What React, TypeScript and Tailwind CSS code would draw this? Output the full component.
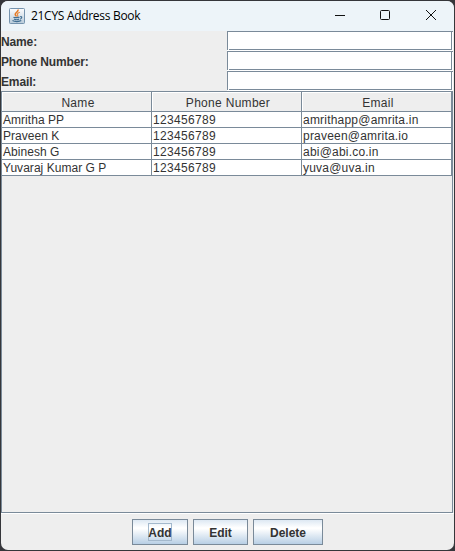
import React from "react";

const contacts = [
  ["Amritha PP", "123456789", "amrithapp@amrita.in"],
  ["Praveen K", "123456789", "praveen@amrita.io"],
  ["Abinesh G", "123456789", "abi@abi.co.in"],
  ["Yuvaraj Kumar G P", "123456789", "yuva@uva.in"],
];

const columnSpacing = ["tracking-[0.04px]", "tracking-[0.33px]", "tracking-[0.21px]"];

function JavaIcon() {
  return (
    <svg className="block h-4 w-4" viewBox="0 0 16 16" fill="none">
      <defs>
        <linearGradient id="cup" x1="0" y1="0" x2="0" y2="1">
          <stop offset="0" stopColor="#fdfdfe" />
          <stop offset="1" stopColor="#b9cbda" />
        </linearGradient>
      </defs>
      <rect x="0.5" y="0.5" width="15" height="15" rx="0.8" fill="url(#cup)" stroke="#7593ae" />
      <path d="M9 1.500C10 3.800 5.800 4.600 6.200 6.500C6.400 7.400 7.300 7.800 7.500 8.500" stroke="#e57a25" strokeWidth="1.5" />
      <path d="M10.800 4.300C8.300 5.200 8 6.200 8.700 7C9 7.500 8.800 8 8.300 8.500" stroke="#e88b42" strokeWidth="1.200" />
      <path d="M4.500 9C5 9.800 9.500 9.700 10.500 9M5 11C6.500 11.800 9 11.700 10 11M11.200 8.700C13.500 8.200 13 10.600 11 11.200M3.500 12.600C5.500 13.900 10.500 13.800 12.300 12.600" stroke="#426f93" strokeWidth="1.200" />
    </svg>
  );
}

function Field({ label }: { label: string }) {
  return (
    <div className="grid h-5 grid-cols-[226px_226px]">
      <label className="pt-[3px] text-[12px] leading-4 font-bold tracking-[-0.13px]">{label}</label>
      <div className="h-5 border-b border-white">
        <div className="h-[19px] border-t border-l border-[#7a8a99] bg-white pr-px pl-px">
          <div className="h-[18px] border-r border-b border-[#7a8a99]" />
        </div>
      </div>
    </div>
  );
}

function MetalButton({ label, size, focused }: { label: string; size: string; focused?: boolean }) {
  return (
    <button
      className={`flex h-[26px] items-center justify-center border border-[#7a8a99] bg-[linear-gradient(#dde8f3_0%,#ffffff_32%,#ffffff_36%,#b8cfe5_100%)] text-[12px] leading-4 font-bold ${size}`}
    >
      <span className={focused ? "flex h-[18px] w-6 items-center justify-center border border-[#a3b8cc]" : "pt-px"}>
        <span className={focused ? "pt-px" : ""}>{label}</span>
      </span>
    </button>
  );
}

export default function App() {
  return (
    <div className="h-[551px] w-[455px] overflow-hidden bg-[#35363a] pt-px pl-px font-['Liberation_Sans',Arial,sans-serif] text-[#333333]">
      <div className="flex h-[549px] w-[453px] flex-col overflow-hidden rounded-[7px] bg-[#eeeeee]">
        <header className="flex h-[30px] shrink-0 items-center bg-[#edf4f9] pl-2 text-black">
          <JavaIcon />
          <span className="ml-1.5 w-[150px] font-['Open_Sans','Noto_Sans',sans-serif] text-[12px] leading-4 tracking-[-0.3px] whitespace-nowrap">
            21CYS Address Book
          </span>
          <svg className="mr-px ml-auto h-[30px] w-[136px]" viewBox="0 0 136 30" fill="none" stroke="#111111">
            <path d="M18 14.500H28" />
            <rect x="63.500" y="9.500" width="9" height="9" rx="1" />
            <path d="M109 9L119 19M119 9L109 19" />
          </svg>
        </header>

        <section className="h-[60px] shrink-0">
          <Field label="Name:" />
          <Field label="Phone Number:" />
          <Field label="Email:" />
        </section>

        <div className="h-[423px] shrink-0 border-b border-white">
          <div className="h-[422px] w-[452px] border border-[#7a8a99]">
            <div className="grid h-5 grid-cols-[150px_150px_150px] text-center text-[12px] leading-[22px] tracking-[0.3px]">
              {["Name", "Phone Number", "Email"].map((title) => (
                <div
                  key={title}
                  className="h-5 border-r border-b border-[#7a8a99] pl-[3px] shadow-[inset_1px_1px_0_#ffffff]"
                >
                  {title}
                </div>
              ))}
            </div>
            {contacts.map((row) => (
              <div key={row[0]} className="grid h-4 grid-cols-[150px_150px_150px] bg-white text-[12px] leading-[17px]">
                {row.map((value, column) => (
                  <div
                    key={value}
                    className={`h-4 border-r border-b border-[#7a8a99] pl-px whitespace-nowrap ${columnSpacing[column]}`}
                  >
                    {value}
                  </div>
                ))}
              </div>
            ))}
          </div>
        </div>

        <footer className="flex justify-center gap-[5px] pt-[5px]">
          <MetalButton label="Add" size="w-14" focused />
          <MetalButton label="Edit" size="w-[55px]" />
          <MetalButton label="Delete" size="w-[70px]" />
        </footer>
      </div>
    </div>
  );
}
